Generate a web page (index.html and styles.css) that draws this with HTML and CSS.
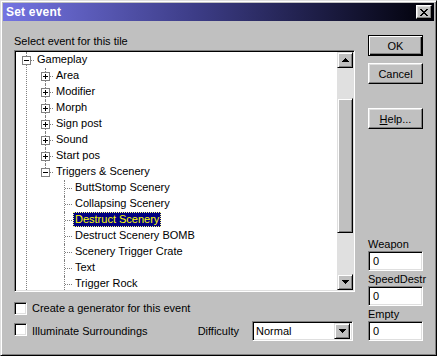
FILE: index.html
```html
<!doctype html>
<html>
<head>
  <link rel="stylesheet" href="styles.css">
</head>
<body>

  <div class="dialog">
    <div class="titlebar">
      <span class="title">Set event</span>
      <div class="close">
        <svg width="8" height="7" viewBox="0 0 8 7" shape-rendering="crispEdges"><path d="M0 0h2v1h1v1h2V1h1V0h2v1H7v1H6v1H5v1h1v1h1v1h1v1H6V6H5V5H3v1H2v1H0V6h1V5h1V4h1V3H2V2H1V1H0z" fill="#000"/></svg>
      </div>
    </div>

    <div class="content">
      <div class="main">
        <div class="caption">Select event for this tile</div>

        <div class="treebox">
          <div class="tree">
            <ul>
              <li>
                <div class="item"><span class="exp minus"></span><span class="lbl">Gameplay</span></div>
                <ul>
                  <li><div class="item"><span class="exp plus"></span><span class="lbl">Area</span></div></li>
                  <li><div class="item"><span class="exp plus"></span><span class="lbl">Modifier</span></div></li>
                  <li><div class="item"><span class="exp plus"></span><span class="lbl">Morph</span></div></li>
                  <li><div class="item"><span class="exp plus"></span><span class="lbl">Sign post</span></div></li>
                  <li><div class="item"><span class="exp plus"></span><span class="lbl">Sound</span></div></li>
                  <li><div class="item"><span class="exp plus"></span><span class="lbl">Start pos</span></div></li>
                  <li class="last">
                    <div class="item"><span class="exp minus"></span><span class="lbl">Triggers &amp; Scenery</span></div>
                    <ul>
                      <li><div class="item"><span class="lbl">ButtStomp Scenery</span></div></li>
                      <li><div class="item"><span class="lbl">Collapsing Scenery</span></div></li>
                      <li><div class="item"><span class="lbl selected">Destruct Scenery</span></div></li>
                      <li><div class="item"><span class="lbl">Destruct Scenery BOMB</span></div></li>
                      <li><div class="item"><span class="lbl">Scenery Trigger Crate</span></div></li>
                      <li><div class="item"><span class="lbl">Text</span></div></li>
                      <li><div class="item"><span class="lbl">Trigger Rock</span></div></li>
                    </ul>
                  </li>
                </ul>
              </li>
            </ul>
          </div>

          <div class="vscroll">
            <div class="sbtn">
              <svg width="7" height="4" viewBox="0 0 7 4" shape-rendering="crispEdges"><path d="M3 0h1v1h1v1h1v1h1v1H0V3h1V2h1V1h1z" fill="#000"/></svg>
            </div>
            <div class="track"><div class="thumb"></div></div>
            <div class="sbtn">
              <svg width="7" height="4" viewBox="0 0 7 4" shape-rendering="crispEdges"><path d="M0 0h7v1H6v1H5v1H4v1H3V3H2V2H1V1H0z" fill="#000"/></svg>
            </div>
          </div>
        </div>

        <div class="opt-row">
          <span class="check"></span>
          <span>Create a generator for this event</span>
        </div>
        <div class="opt-row second">
          <span class="check"></span>
          <span>Illuminate Surroundings</span>
          <span class="spacer"></span>
          <span class="diff-label">Difficulty</span>
          <div class="combo">
            <span class="combo-text">Normal</span>
            <div class="sbtn">
              <svg width="7" height="4" viewBox="0 0 7 4" shape-rendering="crispEdges"><path d="M0 0h7v1H6v1H5v1H4v1H3V3H2V2H1V1H0z" fill="#000"/></svg>
            </div>
          </div>
        </div>
      </div>

      <div class="side">
        <div class="btn default">OK</div>
        <div class="btn cancel">Cancel</div>
        <div class="btn help"><u>H</u>elp...</div>

        <div class="fields">
          <div class="field-label">Weapon</div>
          <div class="field">0</div>
          <div class="field-label">SpeedDestr</div>
          <div class="field">0</div>
          <div class="field-label">Empty</div>
          <div class="field">0</div>
        </div>
      </div>
    </div>
  </div>

</body>
</html>
```

FILE: styles.css
```css
body{
  margin: 0;
  font-family: "Liberation Sans", Arial, sans-serif;
  font-size: 11px;
  color: #000;
}

.dialog{
  width: 437px;
  height: 356px;
  box-sizing: border-box;
  padding: 2px;
  background: #c0c0c0;
  border: 1px solid;
  border-color: #dfdfdf #000 #000 #dfdfdf;
  box-shadow: inset 1px 1px #fff, inset -1px -1px #808080;
  display: flex;
  flex-direction: column;
}

/* title bar */
.titlebar{
  height: 18px;
  flex: none;
  display: flex;
  align-items: center;
  justify-content: space-between;
  padding: 0 2px 0 3px;
  background: linear-gradient(to right, #7474e2, #3c3c86 45%, #000008);
}
.title{
  color: #fff;
  font-weight: bold;
  font-size: 12px;
  letter-spacing: 0.2px;
}
.close{
  width: 16px;
  height: 14px;
  box-sizing: border-box;
  background: #c0c0c0;
  border: 1px solid;
  border-color: #fff #000 #000 #fff;
  box-shadow: inset -1px -1px #808080, inset 1px 1px #dfdfdf;
  display: flex;
  align-items: center;
  justify-content: center;
}

/* body */
.content{
  flex: 1;
  display: flex;
  padding: 13px 11px 13px 11px;
}
.main{
  width: 341px;
  display: flex;
  flex-direction: column;
}
.caption{
  line-height: 14px;
  height: 14px;
  margin-bottom: 2px;
}

.treebox{
  height: 242px;
  box-sizing: border-box;
  border: 1px solid;
  border-color: #808080 #fff #fff #808080;
  box-shadow: inset 1px 1px #000, inset -1px -1px #dfdfdf;
  padding: 1px;
  display: flex;
}
.tree{
  flex: 1;
  background: #fff;
  overflow: hidden;
}
.tree ul{
  list-style: none;
  margin: 0;
  padding: 0;
}
.tree li ul{
  padding-left: 19px;
}
.tree li{
  position: relative;
}
.tree li::before{
  content: "";
  position: absolute;
  left: 10px;
  top: 0;
  bottom: 0;
  border-left: 1px dotted #808080;
}
.tree li.last::before{
  bottom: auto;
  height: 8px;
}
.item{
  position: relative;
  height: 16px;
  padding-left: 19px;
  display: flex;
  align-items: flex-start;
}
.item::before{
  content: "";
  position: absolute;
  left: 11px;
  top: 8px;
  width: 7px;
  border-top: 1px dotted #808080;
}
.exp{
  position: absolute;
  left: 6px;
  top: 4px;
  width: 9px;
  height: 9px;
  box-sizing: border-box;
  border: 1px solid #808080;
  background-color: #fff;
  z-index: 1;
}
.exp.minus{
  background-image: linear-gradient(#000, #000);
  background-repeat: no-repeat;
  background-position: 1px 3px;
  background-size: 5px 1px;
}
.exp.plus{
  background-image: linear-gradient(#000, #000), linear-gradient(#000, #000);
  background-repeat: no-repeat;
  background-position: 1px 3px, 3px 1px;
  background-size: 5px 1px, 1px 5px;
}
.lbl{
  display: inline-block;
  line-height: 13px;
  height: 13px;
  padding: 0 1px;
  border: 1px solid transparent;
  white-space: nowrap;
}
.lbl.selected{
  background: #000080;
  color: #ffff00;
  border: 1px dotted #ffff80;
}

/* scrollbar */
.vscroll{
  width: 16px;
  display: flex;
  flex-direction: column;
}
.sbtn{
  width: 16px;
  height: 16px;
  flex: none;
  box-sizing: border-box;
  background: #c0c0c0;
  border: 1px solid;
  border-color: #dfdfdf #000 #000 #dfdfdf;
  box-shadow: inset 1px 1px #fff, inset -1px -1px #808080;
  display: flex;
  align-items: center;
  justify-content: center;
}
.track{
  flex: 1;
  background: #e0e0e0;
}
.thumb{
  margin-top: 30px;
  height: 135px;
  box-sizing: border-box;
  background: #c0c0c0;
  border: 1px solid;
  border-color: #dfdfdf #000 #000 #dfdfdf;
  box-shadow: inset 1px 1px #fff, inset -1px -1px #808080;
}

/* options below the tree */
.opt-row{
  display: flex;
  align-items: center;
  height: 16px;
  margin-top: 8px;
}
.opt-row.second{
  height: 20px;
  margin-top: 5px;
}
.check{
  width: 13px;
  height: 13px;
  box-sizing: border-box;
  background: #fff;
  border: 1px solid;
  border-color: #808080 #fff #fff #808080;
  box-shadow: inset 1px 1px #000, inset -1px -1px #dfdfdf;
  margin-right: 5px;
}
.opt-row.second .check{
  margin-top: -3px;
}
.spacer{
  flex: 1;
}
.diff-label{
  margin-right: 13px;
}
.combo{
  width: 101px;
  height: 20px;
  margin-right: 2px;
  box-sizing: border-box;
  background: #fff;
  border: 1px solid;
  border-color: #808080 #fff #fff #808080;
  box-shadow: inset 1px 1px #000, inset -1px -1px #dfdfdf;
  padding: 2px;
  display: flex;
  align-items: center;
}
.combo-text{
  flex: 1;
  padding-left: 1px;
}

/* right column */
.side{
  width: 55px;
  margin-left: 13px;
  padding-top: 1px;
  display: flex;
  flex-direction: column;
}
.btn{
  height: 21px;
  box-sizing: border-box;
  background: #c0c0c0;
  border: 1px solid;
  border-color: #fff #000 #000 #fff;
  box-shadow: inset -1px -1px #808080, inset 1px 1px #dfdfdf;
  display: flex;
  align-items: center;
  justify-content: center;
}
.btn.default{
  border-color: #000;
  box-shadow: inset 1px 1px #fff, inset -1px -1px #000, inset -2px -2px #808080;
}
.btn.cancel{
  margin-top: 7px;
}
.btn.help{
  margin-top: 24px;
}
.fields{
  margin-top: auto;
}
.field-label{
  height: 14px;
  line-height: 14px;
  white-space: nowrap;
}
.field{
  height: 20px;
  box-sizing: border-box;
  background: #fff;
  border: 1px solid;
  border-color: #808080 #fff #fff #808080;
  box-shadow: inset 1px 1px #000, inset -1px -1px #dfdfdf;
  padding-left: 4px;
  line-height: 18px;
  margin-bottom: 1px;
}
.field:last-child{
  margin-bottom: 0;
}
```
